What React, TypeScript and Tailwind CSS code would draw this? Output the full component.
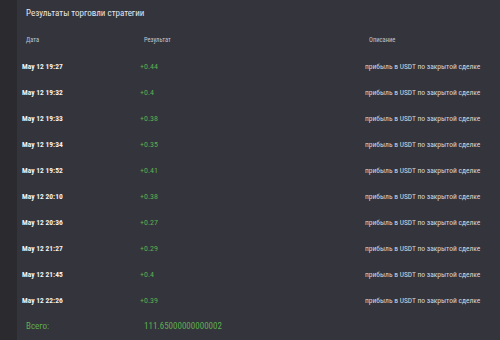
import React from 'react';

const trades = [
  { date: 'May 12 19:27', result: '+0.44' },
  { date: 'May 12 19:32', result: '+0.4' },
  { date: 'May 12 19:33', result: '+0.38' },
  { date: 'May 12 19:34', result: '+0.35' },
  { date: 'May 12 19:52', result: '+0.41' },
  { date: 'May 12 20:10', result: '+0.38' },
  { date: 'May 12 20:36', result: '+0.27' },
  { date: 'May 12 21:27', result: '+0.29' },
  { date: 'May 12 21:45', result: '+0.4' },
  { date: 'May 12 22:26', result: '+0.39' },
];

const font = "font-['Liberation_Sans_Narrow','Roboto_Condensed','Arial_Narrow',sans-serif]";

export default function App() {
  return (
    <div className={`flex h-[340px] w-[500px] overflow-hidden bg-[#2b2b2f] antialiased ${font}`}>
      <div className="w-[17px] shrink-0 bg-[#2b2b2f]" />
      <div className="flex-1 bg-[#33343c]">
        <div className="flex h-[28px] items-center pl-[9px] text-[9px] text-[#e6e6ea]">
          Результаты торговли стратегии
        </div>

        <div className="grid h-[26px] grid-cols-[118px_225px_1fr] items-center pl-[9px] text-[6.5px] text-[#c4c4ca]">
          <span>Дата</span>
          <span>Результат</span>
          <span>Описание</span>
        </div>

        {trades.map((t) => (
          <div key={t.date} className="grid h-[26px] grid-cols-[118px_225px_1fr] items-center pl-[5px]">
            <span className="text-[7.5px] font-bold text-[#f2f2f4]">{t.date}</span>
            <span className="text-[8px] text-[#5fae4f]">{t.result}</span>
            <span className="text-[7.5px] text-[#d8d8dc]">прибыль в USDT по закрытой сделке</span>
          </div>
        ))}

        <div className="grid h-[26px] grid-cols-[118px_1fr] items-center pl-[9px] text-[9px] text-[#5fae4f]">
          <span>Всего:</span>
          <span>111.65000000000002</span>
        </div>
      </div>
    </div>
  );
}
